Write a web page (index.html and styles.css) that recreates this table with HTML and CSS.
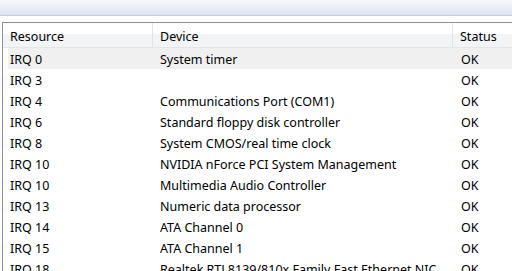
FILE: index.html
```html
<!DOCTYPE html>
<html>
<head>
<meta charset="utf-8">
<link rel="stylesheet" href="styles.css">
</head>
<body>
<div class="topbar"></div>
<div class="panel">
  <div class="header">
    <div class="hcell c1">Resource</div>
    <div class="hcell c2">Device</div>
    <div class="hcell c3">Status</div>
  </div>
  <div class="rows">
    <div class="row sel"><span>IRQ 0</span><span>System timer</span><span>OK</span></div>
    <div class="row"><span>IRQ 3</span><span></span><span>OK</span></div>
    <div class="row"><span>IRQ 4</span><span>Communications Port (COM1)</span><span>OK</span></div>
    <div class="row"><span>IRQ 6</span><span>Standard floppy disk controller</span><span>OK</span></div>
    <div class="row"><span>IRQ 8</span><span>System CMOS/real time clock</span><span>OK</span></div>
    <div class="row"><span>IRQ 10</span><span>NVIDIA nForce PCI System Management</span><span>OK</span></div>
    <div class="row"><span>IRQ 10</span><span>Multimedia Audio Controller</span><span>OK</span></div>
    <div class="row"><span>IRQ 13</span><span>Numeric data processor</span><span>OK</span></div>
    <div class="row"><span>IRQ 14</span><span>ATA Channel 0</span><span>OK</span></div>
    <div class="row"><span>IRQ 15</span><span>ATA Channel 1</span><span>OK</span></div>
    <div class="row"><span>IRQ 18</span><span>Realtek RTL8139/810x Family Fast Ethernet NIC</span><span>OK</span></div>
  </div>
</div>
</body>
</html>
```
FILE: styles.css
```css
html, body {
  margin: 0;
  padding: 0;
  background: #ffffff;
  overflow: hidden;
  width: 512px;
  height: 271px;
}
body {
  font-family: "Noto Sans", "Open Sans", sans-serif;
  font-size: 12.5px;
  color: #000;
}
.topbar {
  height: 15px;
  background: linear-gradient(#f6f8fc, #dee5f1);
  border-bottom: 1px solid #c6cddb;
}
.panel {
  margin-top: 6px;
  margin-left: 2px;
  border-left: 1px solid #8e9199;
  border-top: 1px solid #8e9199;
  width: 600px;
}
.header {
  display: grid;
  grid-template-columns: 150px 300px 1fr;
  height: 24px;
  background: linear-gradient(#ffffff 0, #ffffff 45%, #f3f4f6 45%, #f3f4f6 100%);
  border-bottom: 1px solid #e4e5e8;
}
.hcell {
  display: flex;
  align-items: center;
  padding-left: 7px;
  padding-top: 2px;
  border-right: 1px solid #e2e3e6;
}
.rows {
  padding-left: 5px;
}
.row {
  display: grid;
  grid-template-columns: 150px 301px 1fr;
  height: 21px;
  align-items: center;
  padding-top: 1px;
  box-sizing: border-box;
}
.row span {
  padding-left: 2px;
  white-space: nowrap;
  overflow: hidden;
}
.row.sel {
  background: #f0f0f0;
}
```
